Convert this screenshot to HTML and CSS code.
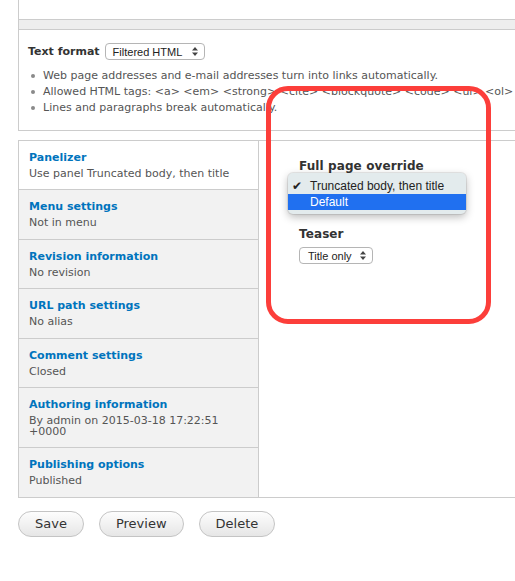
FILE: index.html
```html
<!DOCTYPE html>
<html lang="en">
<head>
<meta charset="utf-8">
<title>Edit content</title>
<link rel="stylesheet" href="styles.css">
</head>
<body>
<div class="page">
  <div class="editor">
    <div class="textarea-end"></div>
    <div class="grippie"></div>
    <div class="filter">
      <div class="filter-row">
        <span class="filter-label">Text format</span>
        <span class="select select-filter"><span class="select-text">Filtered HTML</span><svg class="arrows" width="6" height="9" viewBox="0 0 6 9"><path d="M3 0 L6 3.5 H0 Z M0 5.5 H6 L3 9 Z" fill="#444"/></svg></span>
      </div>
      <ul class="tips">
        <li>Web page addresses and e-mail addresses turn into links automatically.</li>
        <li>Allowed HTML tags: &lt;a&gt; &lt;em&gt; &lt;strong&gt; &lt;cite&gt; &lt;blockquote&gt; &lt;code&gt; &lt;ul&gt; &lt;ol&gt; &lt;li&gt;</li>
        <li>Lines and paragraphs break automatically.</li>
      </ul>
    </div>
  </div>

  <div class="vtabs">
    <ul class="vtab-list">
      <li class="vtab selected"><a class="vtab-title">Panelizer</a><span class="vtab-summary">Use panel Truncated body, then title</span></li>
      <li class="vtab"><a class="vtab-title">Menu settings</a><span class="vtab-summary">Not in menu</span></li>
      <li class="vtab"><a class="vtab-title">Revision information</a><span class="vtab-summary">No revision</span></li>
      <li class="vtab"><a class="vtab-title">URL path settings</a><span class="vtab-summary">No alias</span></li>
      <li class="vtab"><a class="vtab-title">Comment settings</a><span class="vtab-summary">Closed</span></li>
      <li class="vtab"><a class="vtab-title">Authoring information</a><span class="vtab-summary">By admin on 2015-03-18 17:22:51 +0000</span></li>
      <li class="vtab"><a class="vtab-title">Publishing options</a><span class="vtab-summary">Published</span></li>
    </ul>
    <div class="vtab-pane">
      <div class="form-item form-item-full">
        <div class="field-label">Full page override</div>
        <div class="select-space"></div>
        <div class="popup">
          <div class="popup-row"><span class="check">✔</span><span>Truncated body, then title</span></div>
          <div class="popup-row active"><span class="check"></span><span>Default</span></div>
        </div>
      </div>
      <div class="form-item form-item-teaser">
        <div class="field-label">Teaser</div>
        <span class="select select-teaser"><span class="select-text">Title only</span><svg class="arrows" width="6" height="9" viewBox="0 0 6 9"><path d="M3 0 L6 3.5 H0 Z M0 5.5 H6 L3 9 Z" fill="#444"/></svg></span>
      </div>
    </div>
  </div>

  <div class="actions">
    <button class="btn">Save</button>
    <button class="btn">Preview</button>
    <button class="btn">Delete</button>
  </div>

  <div class="annotation"></div>
</div>
</body>
</html>
```

FILE: styles.css
```css
html, body {
  margin: 0;
  padding: 0;
  overflow: hidden;
  background: #fff;
}
body {
  font-family: "DejaVu Sans", Verdana, sans-serif;
  color: #333;
}
.page {
  position: relative;
  width: 560px;
  height: 581px;
  padding-left: 18px;
  box-sizing: border-box;
}

/* editor bottom + text format */
.editor {
  width: 540px;
  border-left: 1px solid #ccc;
}
.textarea-end {
  height: 19px;
}
.grippie {
  height: 9px;
  background: #eee;
  border-top: 1px solid #ccc;
  border-bottom: 1px solid #ccc;
}
.filter {
  padding: 13px 0 14px 9px;
  border-bottom: 1px solid #ccc;
}
.filter-row {
  display: flex;
  align-items: center;
  gap: 5px;
  height: 17px;
  margin-bottom: 8px;
}
.filter-label {
  font-weight: bold;
  font-size: 11px;
  color: #333;
}
.select {
  display: inline-flex;
  align-items: center;
  justify-content: space-between;
  box-sizing: border-box;
  height: 17px;
  border: 1px solid #b5b5b5;
  border-radius: 4px;
  background: #fff;
  font-family: "Liberation Sans", Arial, sans-serif;
  font-size: 11px;
  color: #222;
}
.select-filter {
  width: 100px;
  padding: 0 6px 0 7px;
}
.select-teaser {
  width: 74px;
  padding: 0 6px 0 8px;
}
.arrows {
  display: block;
}
.tips {
  margin: 0;
  padding: 0;
  list-style: none;
  font-size: 11px;
  line-height: 16px;
  color: #555;
  white-space: nowrap;
  overflow: hidden;
}
.tips li {
  display: flex;
  align-items: flex-start;
}
.tips li::before {
  content: "";
  flex: none;
  width: 4px;
  height: 4px;
  border-radius: 50%;
  background: #8a8a8a;
  margin: 6px 8px 0 3px;
}

/* vertical tabs */
.vtabs {
  display: flex;
  width: 540px;
  margin-top: 9px;
  border: 1px solid #ccc;
  border-right: none;
}
.vtab-list {
  flex: none;
  width: 239px;
  margin: 0;
  padding: 0;
  list-style: none;
  background: #f2f2f2;
  border-right: 1px solid #ccc;
}
.vtab {
  display: flex;
  flex-direction: column;
  padding: 9px 10px 10.4px 10px;
  border-bottom: 1px solid #ccc;
}
.vtab:last-child {
  border-bottom: none;
}
.vtab.selected {
  background: #fff;
}
.vtab-title {
  font-weight: bold;
  font-size: 11px;
  line-height: 16px;
  color: #0074bd;
}
.vtab-summary {
  margin-top: 2px;
  font-size: 11px;
  line-height: 11px;
  color: #555;
  max-width: 215px;
}
.vtab-pane {
  flex: 1;
  padding: 17px 20px 0 40px;
}
.form-item {
  position: relative;
}
.field-label {
  font-weight: bold;
  font-size: 12px;
  line-height: 16px;
  color: #333;
  letter-spacing: 0.1px;
}
.select-space {
  height: 17px;
  margin-top: 2px;
}
.form-item-teaser {
  margin-top: 33px;
}
.form-item-teaser .select {
  margin-top: 5px;
}

/* native select popup (open) */
.popup {
  position: absolute;
  top: 15px;
  left: -11px;
  width: 178px;
  padding: 5px 0 4px;
  background: #e3ebed;
  border-radius: 5px;
  box-shadow: 0 3px 9px rgba(0, 0, 0, 0.28), 0 0 0 1px rgba(0, 0, 0, 0.08);
  font-family: "Liberation Sans", Arial, sans-serif;
  font-size: 12px;
  color: #222;
}
.popup-row {
  display: flex;
  align-items: center;
  height: 16px;
  padding-left: 4px;
}
.popup-row.active {
  background: #2070f0;
  color: #fff;
}
.check {
  width: 18px;
  font-family: "DejaVu Sans", sans-serif;
  font-size: 12px;
  color: #222;
}

/* buttons */
.actions {
  display: flex;
  gap: 15px;
  margin-top: 13px;
}
.btn {
  height: 26px;
  padding: 0 16px;
  border: 1px solid #c4c4c4;
  border-radius: 13px;
  background: linear-gradient(#fdfdfd, #e6e6e6);
  font-family: "DejaVu Sans", Verdana, sans-serif;
  font-size: 13px;
  color: #333;
}

/* red annotation overlay */
.annotation {
  position: absolute;
  top: 86px;
  left: 266px;
  width: 225px;
  height: 238px;
  box-sizing: border-box;
  border: 5px solid #fc3e3a;
  border-radius: 22px;
  pointer-events: none;
}
```
